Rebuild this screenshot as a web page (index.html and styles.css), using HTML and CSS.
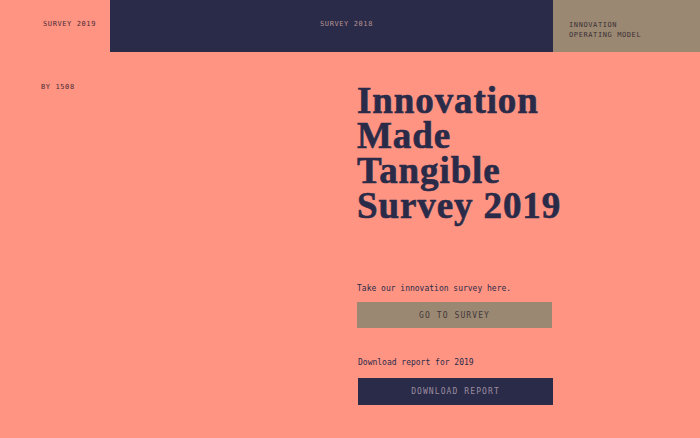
FILE: index.html
```html
<!DOCTYPE html>
<html lang="en">
<head>
<meta charset="utf-8">
<title>Innovation Made Tangible Survey 2019</title>
<link rel="stylesheet" href="styles.css">
</head>
<body>
<header class="topbar">
  <a class="tab tab-current" href="#">SURVEY 2019</a>
  <a class="tab tab-dark" href="#">SURVEY 2018</a>
  <a class="tab tab-tan" href="#">INNOVATION<br>OPERATING MODEL</a>
</header>
<main class="page">
  <aside class="byline">BY 1508</aside>
  <section class="content">
    <h1 class="title">Innovation<br>Made<br>Tangible<br>Survey 2019</h1>
    <p class="lead lead-first">Take our innovation survey here.</p>
    <a class="btn btn-tan" href="#">GO TO SURVEY</a>
    <p class="lead lead-second">Download report for 2019</p>
    <a class="btn btn-dark" href="#">DOWNLOAD REPORT</a>
  </section>
</main>
</body>
</html>
```
FILE: styles.css
```css
html, body {
  margin: 0;
  padding: 0;
}
body {
  width: 700px;
  height: 438px;
  overflow: hidden;
  background: #ff9483;
  color: #2a2b48;
  font-family: "DejaVu Sans Mono", "Liberation Mono", monospace;
}
a { text-decoration: none; }

.topbar {
  display: flex;
  height: 52px;
}
.tab {
  font-size: 7px;
  letter-spacing: 0.6px;
  line-height: 10px;
  box-sizing: border-box;
}
.tab-current {
  width: 110px;
  padding: 19px 0 0 43px;
  color: #4a2a34;
}
.tab-dark {
  width: 443px;
  background: #2a2b48;
  color: #b69294;
  padding: 19px 0 0 210px;
}
.tab-tan {
  flex: 1;
  background: #9a8872;
  color: #3a3036;
  padding: 20px 0 0 16px;
}

.page {
  display: flex;
}
.byline {
  width: 357px;
  box-sizing: border-box;
  padding: 31px 0 0 41px;
  font-size: 7px;
  letter-spacing: 0.6px;
  color: #4a2a34;
}
.content {
  display: flex;
  flex-direction: column;
  align-items: flex-start;
}
.title {
  margin: 31px 0 0 0;
  font-family: "Liberation Serif", "DejaVu Serif", serif;
  font-weight: bold;
  font-size: 37px;
  line-height: 35px;
  letter-spacing: 0.9px;
  -webkit-text-stroke: 0.6px #2a2b48;
  color: #2a2b48;
}
.lead {
  margin: 0;
  font-size: 8px;
  line-height: 10px;
  color: #2a2b48;
}
.lead-first { margin-top: 61px; }
.lead-second { margin-top: 30px; margin-left: 1px; }
.btn {
  display: flex;
  align-items: center;
  justify-content: center;
  width: 195px;
  height: 26px;
  font-size: 8px;
  letter-spacing: 1.1px;
}
.btn-tan {
  margin-top: 8px;
  background: #9a8872;
  color: #43383c;
}
.btn-dark {
  margin-top: 10px;
  margin-left: 1px;
  height: 27px;
  background: #2a2b48;
  color: #9c8ca0;
}
```
